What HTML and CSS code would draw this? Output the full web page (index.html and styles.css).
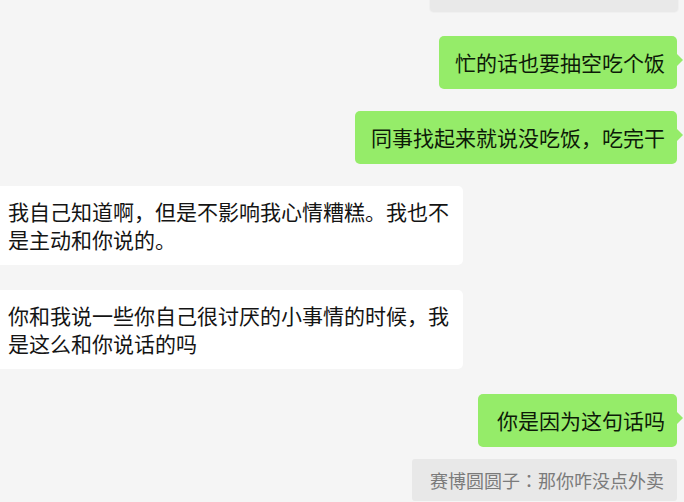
FILE: index.html
```html
<!DOCTYPE html>
<html lang="zh-CN">
<head>
    <meta charset="UTF-8">
    <meta name="viewport" content="width=device-width, initial-scale=1.0">
    <title>聊天记录</title>
    <link rel="stylesheet" href="styles.css">
</head>
<body>
    <div class="chat">
        <div class="row right">
            <div class="prev-box"></div>
        </div>

        <div class="row right gap-24">
            <div class="bubble me">忙的话也要抽空吃个饭</div>
        </div>

        <div class="row right gap-22">
            <div class="bubble me">同事找起来就说没吃饭，吃完干</div>
        </div>

        <div class="row left gap-22">
            <div class="bubble other">我自己知道啊，但是不影响我心情糟糕。我也不是主动和你说的。</div>
        </div>

        <div class="row left gap-25">
            <div class="bubble other">你和我说一些你自己很讨厌的小事情的时候，我是这么和你说话的吗</div>
        </div>

        <div class="row right gap-25">
            <div class="bubble me wide-left">你是因为这句话吗</div>
        </div>

        <div class="row right gap-12">
            <div class="quote">赛博圆圆子<span class="colon" lang="zh-TW">：</span>那你咋没点外卖</div>
        </div>
    </div>
</body>
</html>
```

FILE: styles.css
```css
body {
    margin: 0;
    background-color: #f5f5f5;
    font-family: "Noto Sans CJK SC", "Noto Sans", sans-serif;
    overflow: hidden;
}
.chat {
    display: flex;
    flex-direction: column;
    width: 684px;
}
.row {
    display: flex;
}
.row.right {
    justify-content: flex-end;
    padding-right: 7px;
}
.row.left {
    justify-content: flex-start;
    margin-left: -8px;
}
.gap-12 { margin-top: 12px; }
.gap-22 { margin-top: 22px; }
.gap-24 { margin-top: 24px; }
.gap-25 { margin-top: 25px; }

.prev-box {
    width: 248px;
    height: 12px;
    margin-right: -1px;
    background-color: #e9e9e9;
    border-radius: 0 0 4px 4px;
    box-shadow: 0 0 0 1px #f0f0f0;
}

.bubble {
    position: relative;
    font-size: 21px;
    line-height: 28px;
    color: #141414;
    border-radius: 5px;
}
.bubble.me {
    background-color: #95ec69;
    padding: 12px 12px 13px 16px;
    color: #0d1a08;
}
.bubble.me::after {
    content: "";
    position: absolute;
    right: -6px;
    top: 18px;
    border-left: 6px solid #95ec69;
    border-top: 6px solid transparent;
    border-bottom: 6px solid transparent;
}
.bubble.wide-left {
    padding-left: 19px;
}
.bubble.other {
    background-color: #ffffff;
    width: 441px;
    padding: 11px 14px 12px 16px;
}

.quote {
    height: 42px;
    line-height: 42px;
    padding: 0 13px 0 18px;
    font-size: 18px;
    color: #7b7b7b;
    background-color: #e8e8e8;
    border-radius: 3px;
}
.quote .colon {
    font-family: "Noto Sans CJK TC", sans-serif;
}
```
